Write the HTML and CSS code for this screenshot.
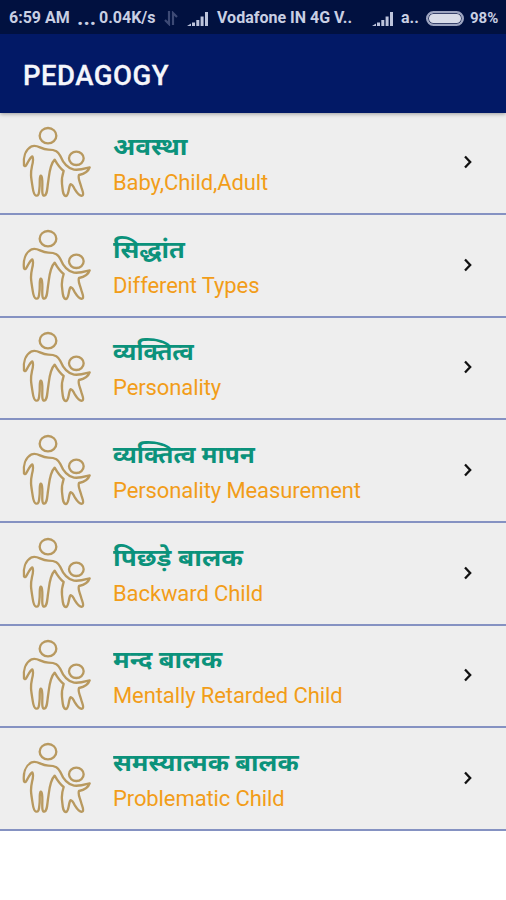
FILE: index.html
```html
<!DOCTYPE html>
<html lang="hi">
<head>
<meta charset="utf-8">
<title>Pedagogy</title>
<link rel="stylesheet" href="styles.css">
</head>
<body>
<svg class="defs" width="0" height="0" aria-hidden="true">
  <symbol id="family" viewBox="36 48 210 216">
    <g fill="none" stroke="#b8995f" stroke-width="7" stroke-linejoin="round" stroke-linecap="round">
      <ellipse cx="114" cy="77" rx="25" ry="23"/>
      <ellipse cx="199" cy="145" rx="22" ry="20"/>
      <path d="M42 166C39 142 46 119 65 109C84 102 91 119 115 119C137 119 145 125 151 138C160 160 173 175 192 179C211 181 221 177 239 172C235 184 221 192 207 195C203 205 210 216 213 228C216 240 223 252 218 256C211 261 201 249 195 239C190 229 184 218 180 225C175 238 176 257 168 258C158 258 158 239 156 222C154 205 157 195 161 183C149 174 142 163 134 149C118 165 118 196 114 219C111 242 111 255 103 257C95 258 97 238 97 222C97 209 96 196 92 197C87 201 91 220 88 239C87 252 85 258 78 257C70 255 69 239 67 226C63 202 61 190 66 168C70 153 70 144 67 139C60 142 55 155 49 165C47 169 44 170 42 166Z"/>
    </g>
  </symbol>
  <symbol id="chevron" viewBox="0 0 12 16">
    <path d="M3 2.5L8.2 8L3 13.5" fill="none" stroke="#111" stroke-width="2.3"/>
  </symbol>
  <symbol id="signal" viewBox="0 0 22 15">
    <path d="M0 14L4 11.5V14ZM5 10.5H8V14H5ZM9.3 8H12.3V14H9.3ZM13.6 4.5H16.6V14H13.6ZM18 0H21V14H18Z" fill="#bdc4dc"/>
  </symbol>
</svg>
<header class="top">
  <div class="status">
    <span class="time">6:59 AM</span>
    <span class="dots">...</span>
    <span class="speed">0.04K/s</span>
    <svg class="updown" viewBox="0 0 14 15"><path d="M5 0V13L1 9M9 14V2L13 6" fill="none" stroke="#3d4a75" stroke-width="2.2"/></svg>
    <svg class="signal"><use href="#signal"/></svg>
    <span class="carrier">Vodafone IN 4G V..</span>
    <svg class="signal second"><use href="#signal"/></svg>
    <span class="sim">a..</span>
    <span class="battery"></span>
    <span class="percent">98%</span>
  </div>
  <h1 class="title">PEDAGOGY</h1>
</header>
<main class="list">
  <div class="row"><svg class="family"><use href="#family"/></svg><div class="text"><div class="hi widest">अवस्था</div><div class="en">Baby,Child,Adult</div></div><svg class="chevron"><use href="#chevron"/></svg></div>
  <div class="row"><svg class="family"><use href="#family"/></svg><div class="text"><div class="hi wide">सिद्धांत</div><div class="en">Different Types</div></div><svg class="chevron"><use href="#chevron"/></svg></div>
  <div class="row"><svg class="family"><use href="#family"/></svg><div class="text"><div class="hi">व्यक्तित्व</div><div class="en">Personality</div></div><svg class="chevron"><use href="#chevron"/></svg></div>
  <div class="row"><svg class="family"><use href="#family"/></svg><div class="text"><div class="hi semi">व्यक्तित्व मापन</div><div class="en">Personality Measurement</div></div><svg class="chevron"><use href="#chevron"/></svg></div>
  <div class="row"><svg class="family"><use href="#family"/></svg><div class="text"><div class="hi widest">पिछड़े बालक</div><div class="en">Backward Child</div></div><svg class="chevron"><use href="#chevron"/></svg></div>
  <div class="row"><svg class="family"><use href="#family"/></svg><div class="text"><div class="hi wide">मन्द बालक</div><div class="en">Mentally Retarded Child</div></div><svg class="chevron"><use href="#chevron"/></svg></div>
  <div class="row"><svg class="family"><use href="#family"/></svg><div class="text"><div class="hi wide">समस्यात्मक बालक</div><div class="en">Problematic Child</div></div><svg class="chevron"><use href="#chevron"/></svg></div>
</main>
</body>
</html>
```
FILE: styles.css
```css
* { box-sizing: border-box; }
body {
  margin: 0;
  min-height: 900px;
  background: #fff;
  font-family: Roboto, "Noto Sans", "Noto Sans Devanagari", sans-serif;
  overflow: hidden;
}
svg { display: block; flex: none; }
.defs { position: absolute; }
.top {
  position: relative;
  z-index: 1;
  height: 112.5px;
  background: #021966;
  box-shadow: 0 1px 4px rgba(0, 0, 0, .35);
}
.status {
  display: flex;
  align-items: center;
  height: 34px;
  padding: 2px 0 0 9px;
  background: #011140;
  color: #c9cfe3;
  font-size: 16px;
  font-weight: 700;
  line-height: 32px;
  white-space: nowrap;
}
.status span { flex: none; }
.time { width: 68px; }
.dots { width: 22px; font-size: 22px; line-height: 28px; }
.speed { width: 65px; }
.updown { width: 14px; height: 15px; }
.signal { width: 22px; height: 15px; margin-left: 9px; margin-top: 2px; }
.carrier { width: 148px; margin-left: 8px; }
.second { margin-left: 7px; }
.sim { width: 18px; margin-left: 7px; }
.battery {
  width: 38px;
  height: 15px;
  margin-left: 7px;
  border: 2px solid #9ca4c0;
  border-radius: 8px;
  background: #d8dce9;
  box-shadow: inset 0 0 0 1px #38436c;
}
.percent { margin-left: 6px; font-size: 15px; }
.title {
  margin: 0;
  padding-left: 23px;
  color: #f5f6fb;
  font-size: 27.5px;
  font-weight: 500;
  letter-spacing: .5px;
  line-height: 83px;
  -webkit-text-stroke: .3px #f5f6fb;
}
.list { margin-top: -.2px; }
.row {
  display: flex;
  align-items: flex-start;
  height: 102.65px;
  padding: 13.7px 32px 0 22px;
  border-bottom: 2px solid #8592c2;
  background: #eee;
}
.family { width: 70px; height: 72px; }
.text { flex: 1; margin-left: 21px; white-space: nowrap; }
.hi {
  height: 38px;
  color: #0b927b;
  font-size: 24px;
  font-weight: 700;
  line-height: 43px;
  transform-origin: left;
}
.semi { transform: scaleX(1.02); }
.wide { transform: scaleX(1.065); }
.widest { transform: scaleX(1.09); }
.en {
  color: #f29d19;
  font-size: 22px;
  letter-spacing: -.1px;
  line-height: 38px;
}
.chevron { width: 12px; height: 16px; margin-top: 28px; }
```
